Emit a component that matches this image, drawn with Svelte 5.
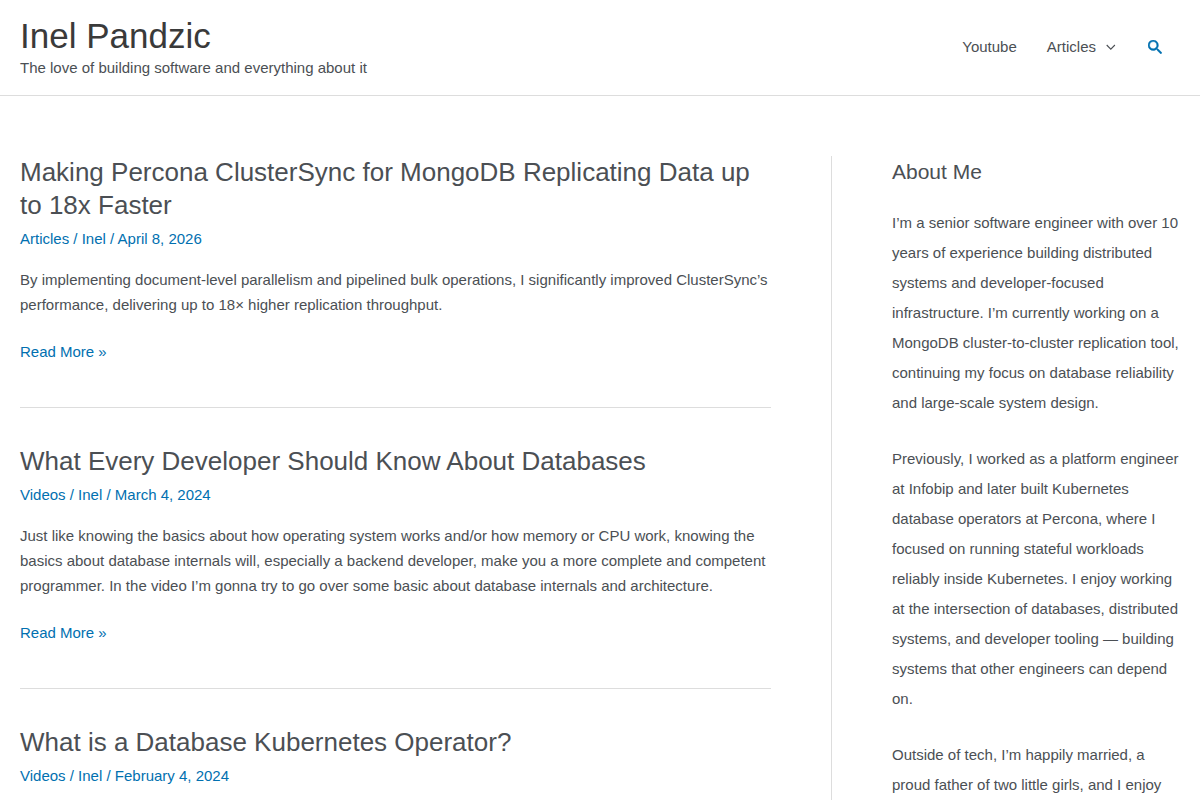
<script lang="ts">
  interface Post {
    title: string;
    category: string;
    author: string;
    date: string;
    excerpt?: string;
  }

  const posts: Post[] = [
    {
      title: 'Making Percona ClusterSync for MongoDB Replicating Data up to 18x Faster',
      category: 'Articles',
      author: 'Inel',
      date: 'April 8, 2026',
      excerpt: 'By implementing document-level parallelism and pipelined bulk operations, I significantly improved ClusterSync’s performance, delivering up to 18× higher replication throughput.'
    },
    {
      title: 'What Every Developer Should Know About Databases',
      category: 'Videos',
      author: 'Inel',
      date: 'March 4, 2024',
      excerpt: 'Just like knowing the basics about how operating system works and/or how memory or CPU work, knowing the basics about database internals will, especially a backend developer, make you a more complete and competent programmer. In the video I’m gonna try to go over some basic about database internals and architecture.'
    },
    {
      title: 'What is a Database Kubernetes Operator?',
      category: 'Videos',
      author: 'Inel',
      date: 'February 4, 2024'
    }
  ];

  const about = [
    'I’m a senior software engineer with over 10 years of experience building distributed systems and developer-focused infrastructure. I’m currently working on a MongoDB cluster-to-cluster replication tool, continuing my focus on database reliability and large-scale system design.',
    'Previously, I worked as a platform engineer at Infobip and later built Kubernetes database operators at Percona, where I focused on running stateful workloads reliably inside Kubernetes. I enjoy working at the intersection of databases, distributed systems, and developer tooling — building systems that other engineers can depend on.',
    'Outside of tech, I’m happily married, a proud father of two little girls, and I enjoy'
  ];
</script>

<header class="site-header">
  <div class="container header-row">
    <div class="branding">
      <p class="site-title"><a href="/">Inel Pandzic</a></p>
      <p class="tagline">The love of building software and everything about it</p>
    </div>

    <nav class="menu">
      <a href="#youtube">Youtube</a>
      <a href="#articles" class="has-children">
        Articles
        <svg class="chevron" viewBox="0 0 10 10" width="10" height="10" aria-hidden="true">
          <path d="M0.7 3 L4.8 7.1 L8.9 3" fill="none" stroke="currentColor" stroke-width="1.1" />
        </svg>
      </a>
      <button class="search" aria-label="Search">
        <svg viewBox="3 3 17.5 17.5" width="14" height="14" aria-hidden="true">
          <path
            fill="currentColor"
            stroke="currentColor"
            stroke-width="0.6"
            d="M15.5 14h-.79l-.28-.27A6.471 6.471 0 0 0 16 9.5 6.5 6.5 0 1 0 9.5 16c1.61 0 3.09-.59 4.23-1.57l.27.28v.79l5 4.99L20.49 19l-4.99-5zm-6 0C7.01 14 5 11.99 5 9.5S7.01 5 9.5 5 14 7.01 14 9.5 11.99 14 9.5 14z"
          />
        </svg>
      </button>
    </nav>
  </div>
</header>

<div class="container content">
  <main class="primary">
    {#each posts as post}
      <article class="post">
        <h2><a href="#post">{post.title}</a></h2>
        <div class="meta">
          <a href="#category">{post.category}</a> / <a href="#author">{post.author}</a> / <span>{post.date}</span>
        </div>
        {#if post.excerpt}
          <p class="excerpt">{post.excerpt}</p>
          <p class="more"><a href="#post">Read More »</a></p>
        {/if}
      </article>
    {/each}
  </main>

  <aside class="secondary">
    <h2>About Me</h2>
    {#each about as text}
      <p>{text}</p>
    {/each}
  </aside>
</div>

<style>
  :global(body) {
    margin: 0;
    background: #fff;
    color: #4b4f54;
    font-family: "Liberation Sans", Arial, sans-serif;
    font-size: 15px;
    line-height: 25px;
  }

  a { color: #0170b0; text-decoration: none; }
  p, h2 { margin: 0; font-weight: 400; }

  .container {
    box-sizing: border-box;
    max-width: 1240px;
    margin: 0 auto;
    padding: 0 20px;
  }

  /* header */
  .site-header { border-bottom: 1px solid #ddd; }
  .header-row {
    display: flex;
    align-items: center;
    justify-content: space-between;
    padding-top: 15px;
    padding-bottom: 17px;
  }
  .site-title { font-size: 35px; line-height: 42px; }
  .site-title a { color: #3a3a3a; }
  .tagline { line-height: 21px; }

  .menu {
    display: flex;
    align-items: center;
    gap: 30px;
  }
  .menu a { color: #4b4f54; }
  .menu .has-children {
    display: flex;
    align-items: center;
    gap: 10px;
  }
  .chevron { display: block; }
  .search {
    display: flex;
    padding: 0 18px 0 2px;
    border: 0;
    background: none;
    color: #0170b0;
    cursor: pointer;
  }

  /* posts and sidebar */
  .content {
    display: grid;
    grid-template-columns: 7fr 3fr;
    padding-top: 60px;
  }
  .primary {
    padding-right: 60px;
    border-right: 1px solid #ddd;
  }
  .post + .post {
    margin-top: 43px;
    padding-top: 37px;
    border-top: 1px solid #ddd;
  }
  .post h2 { font-size: 26px; line-height: 33px; }
  .post h2 a { color: #4b4f54; }
  .meta { margin: 4px 0 16px; color: #0170b0; }
  .more { margin-top: 22px; }

  .secondary { padding-left: 60px; }
  .secondary h2 {
    margin-bottom: 20px;
    font-size: 21px;
    line-height: 32px;
  }
  .secondary p {
    margin-bottom: 26px;
    line-height: 30px;
  }
</style>
